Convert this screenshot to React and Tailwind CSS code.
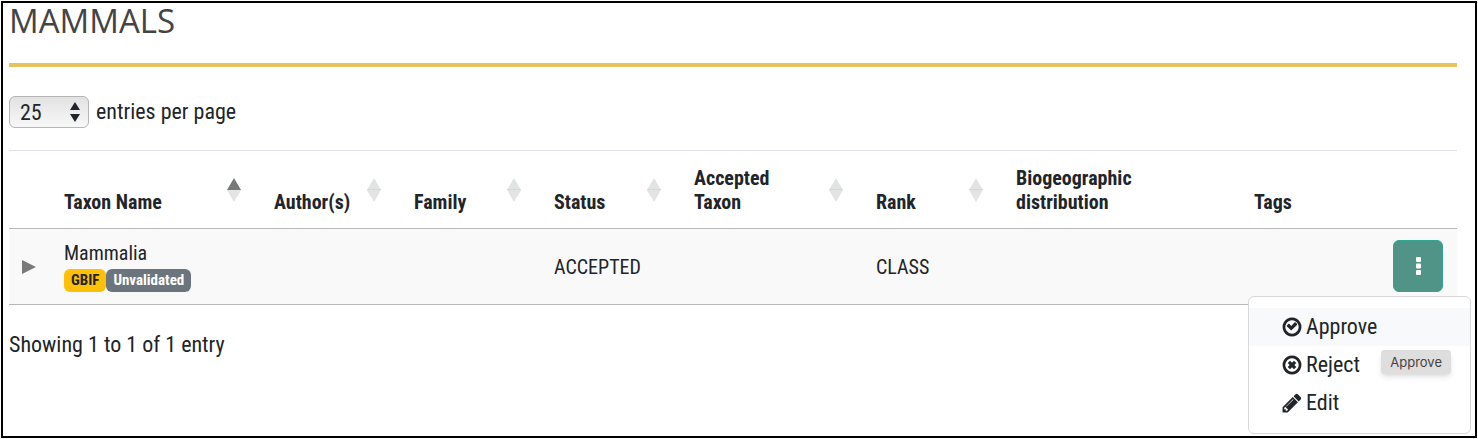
const RING =
  "M1312 896q0-148-73-273t-198-198-273-73-273 73-198 198-73 273 73 273 198 198 273 73 273-73 198-198 73-273zm224 0q0 209-103 385.5t-279.5 279.5-385.5 103-385.5-103-279.5-279.5-103-385.5 103-385.5 279.5-279.5 385.5-103 385.5 103 279.5 279.5 103 385.5z";
const ICONS = {
  check:
    "M1171 723l-422 422q-19 19-45 19t-45-19l-294-294q-19-19-19-45t19-45l102-102q19-19 45-19t45 19l147 147 275-275q19-19 45-19t45 19l102 102q19 19 19 45t-19 45z" +
    RING,
  times:
    "M1097 1079l-146 146q-10 10-23 10t-23-10l-137-137-137 137q-10 10-23 10t-23-10l-146-146q-10-10-10-23t10-23l137-137-137-137q-10-10-10-23t10-23l146-146q10-10 23-10t23 10l137 137 137-137q10-10 23-10t23 10l146 146q10 10 10 23t-10 23l-137 137 137 137q10 10 10 23t-10 23z" +
    RING,
  pencil:
    "M363 1536l91-91-235-235-91 91v107h128v128h107zm523-928q0-22-22-22-10 0-17 7l-542 542q-7 7-7 17 0 22 22 22 10 0 17-7l542-542q7-7 7-17zm-54-192l416 416-832 832h-416v-416zm683 96q0 53-37 90l-166 166-416-416 166-165q36-38 90-38 53 0 91 38l235 234q37 39 37 91z",
};

const COLUMNS = [
  { label: "Taxon Name", sort: "asc" },
  { label: "Author(s)", sort: "both" },
  { label: "Family", sort: "both" },
  { label: "Status", sort: "both" },
  { label: "Accepted Taxon", sort: "both" },
  { label: "Rank", sort: "both" },
  { label: "Biogeographic distribution" },
  { label: "Tags" },
];

const ACTIONS = [
  { label: "Approve", icon: "check", active: true },
  { label: "Reject", icon: "times" },
  { label: "Edit", icon: "pencil" },
];

function SortArrows({ sort }) {
  return (
    <svg viewBox="0 0 14 24" className="mt-[15px] h-6 w-3.5 shrink-0" aria-hidden="true">
      <path d="M7 0l7 12H0z" fill={sort === "asc" ? "#77787a" : "#e2e4e4"} />
      <path d="M0 12h14l-7 12z" fill="#e2e4e4" />
      {sort === "both" && <path d="M0 11h14v1H0z" fill="#d6d8d8" />}
    </svg>
  );
}

function HeaderCell({ label, sort }) {
  return (
    <th scope="col" className="h-px pb-3.5 pl-[13px] pr-5 pt-3 text-left font-bold" aria-sort={sort === "asc" ? "ascending" : undefined}>
      {sort ? (
        <button type="button" className="flex h-full w-full items-start justify-between gap-3 text-left">
          <span className="self-end">{label}</span>
          <SortArrows sort={sort} />
        </button>
      ) : (
        <span className="flex h-full items-end">{label}</span>
      )}
    </th>
  );
}

function ActionMenu() {
  return (
    <div className="absolute right-[-28px] top-[56px] z-10 w-[223px] rounded-md border border-[#d8d8d8] bg-white py-[11px]">
      <ul>
        {ACTIONS.map(({ label, icon, active }) => (
          <li key={label}>
            <button
              type="button"
              className={`flex h-[38px] w-full items-center gap-1 pl-[33px] text-[22px] leading-7 ${active ? "bg-[#f8f9fa]" : ""}`}
            >
              <svg viewBox="0 0 1536 1792" fill="currentColor" className="h-[22px] w-5" aria-hidden="true">
                <path d={ICONS[icon]} />
              </svg>
              {label}
            </button>
          </li>
        ))}
      </ul>
      <div
        role="tooltip"
        className="absolute right-[19px] top-[53px] rounded-[3px] bg-[#dedede] px-[9px] py-1 font-['Inter',sans-serif] text-[13px] leading-4 text-[#444] shadow-md"
      >
        Approve
      </div>
    </div>
  );
}

export default function App() {
  return (
    <main className="flex min-h-screen flex-col bg-white p-px font-['Roboto_Condensed','Liberation_Sans_Narrow',sans-serif] text-[#212529]">
      <div className="grow border-2 border-black pl-1.5 pr-[18px]">
        <h1 className="border-b-4 border-[#e3c45e] pb-6 font-['Open_Sans',sans-serif] text-[33px] leading-[36px] text-[#444]">
          MAMMALS
        </h1>
        <div className="mt-[29px] flex items-center gap-[7px] text-[22px] leading-8">
          <div className="relative">
            <select
              id="page-size"
              defaultValue="25"
              className="block h-8 w-20 appearance-none rounded-md border border-[#b5b5b5] bg-linear-to-b from-[#e2e2e2] to-[#f8f8f8] pb-0.5 pl-2.5"
            >
              <option>10</option>
              <option>25</option>
              <option>50</option>
            </select>
            <svg viewBox="0 0 10 20" fill="#212529" className="pointer-events-none absolute right-[9px] top-1.5 h-5 w-2.5" aria-hidden="true">
              <path d="M5 0l5 8H0zM0 12h10l-5 8z" />
            </svg>
          </div>
          <label htmlFor="page-size">entries per page</label>
        </div>
        <table className="mt-[22px] w-full table-fixed border-collapse text-xl leading-6">
          <colgroup>
            <col className="w-[42px]" />
            <col className="w-[210px]" />
            <col className="w-[140px]" />
            <col className="w-[140px]" />
            <col className="w-[140px]" />
            <col className="w-[182px]" />
            <col className="w-[140px]" />
            <col />
            <col className="w-[140px]" />
            <col className="w-[76px]" />
          </colgroup>
          <thead>
            <tr className="h-[78px] border-b border-t border-b-[#b8b8b8] border-t-[#dee2e6]">
              <td />
              {COLUMNS.map((column) => (
                <HeaderCell key={column.label} {...column} />
              ))}
              <td />
            </tr>
          </thead>
          <tbody>
            <tr className="h-[76px] border-b border-[#b8b8b8] bg-[#f9f9f9]">
              <td className="pl-[13px]">
                <button type="button" aria-label="Expand row" className="block">
                  <svg viewBox="0 0 14 14" className="h-3.5 w-3.5" fill="#7a7a7a">
                    <path d="M0 0l14 7-14 7z" />
                  </svg>
                </button>
              </td>
              <td className="pl-[13px]">
                <div>Mammalia</div>
                <div className="mt-1 flex text-[15px] font-bold leading-[23px]">
                  <span className="rounded-md bg-[#ffc107] px-[7px]">GBIF</span>
                  <span className="rounded-md bg-[#6c757d] px-[7px] text-white">Unvalidated</span>
                </div>
              </td>
              <td />
              <td />
              <td className="pl-[13px]">ACCEPTED</td>
              <td />
              <td className="pl-[13px]">CLASS</td>
              <td />
              <td />
              <td className="pb-0.5 pl-3">
                <div className="relative w-[50px]">
                  <button
                    type="button"
                    aria-label="Row actions"
                    className="flex h-[52px] w-full items-center justify-center rounded-md border border-[#2fa592] bg-[#509488]"
                  >
                    <svg viewBox="0 0 5 18" className="h-[18px] w-[5px]" fill="white">
                      <rect width="5" height="5" rx="1" />
                      <rect y="6.5" width="5" height="5" rx="1" />
                      <rect y="13" width="5" height="5" rx="1" />
                    </svg>
                  </button>
                  <ActionMenu />
                </div>
              </td>
            </tr>
          </tbody>
        </table>
        <p className="mt-6 text-[22px] leading-8">Showing 1 to 1 of 1 entry</p>
      </div>
    </main>
  );
}
